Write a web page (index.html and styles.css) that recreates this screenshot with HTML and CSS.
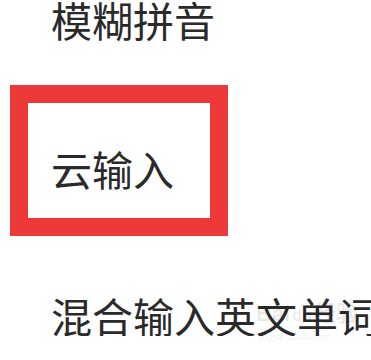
FILE: index.html
```html
<!DOCTYPE html>
<html lang="zh-CN">
<head>
    <meta charset="UTF-8">
    <meta name="viewport" content="width=device-width, initial-scale=1.0">
    <title>输入设置</title>
    <link rel="stylesheet" href="styles.css">
</head>
<body>
    <div class="settings">
        <div class="option option-first">模糊拼音</div>
        <div class="highlight">
            <div class="option option-inner">云输入</div>
        </div>
        <div class="option option-last">混合输入英文单词</div>
    </div>
    <div class="watermark">
        <span class="wm-logo">Bai<span class="wm-du">du</span>经验</span>
        <span class="wm-url">jingyan.baidu.com</span>
    </div>
</body>
</html>
```

FILE: styles.css
```css
body {
    margin: 0;
    overflow: hidden;
    background: #fff;
    font-family: "Noto Sans CJK SC", "Noto Sans", sans-serif;
}
.settings {
    display: flex;
    flex-direction: column;
    align-items: flex-start;
}
.option {
    font-size: 41px;
    line-height: 41px;
    color: #2a2a2a;
    padding-left: 51px;
    white-space: nowrap;
}
.option-first {
    margin-top: -1px;
}
.highlight {
    box-sizing: border-box;
    width: 218px;
    height: 151px;
    margin: 45px 0 0 10px;
    border: 18px solid #ee3939;
    padding-top: 45px;
}
.option-inner {
    padding-left: 23px;
}
.option-last {
    margin-top: 59px;
}
.watermark {
    position: absolute;
    left: 256px;
    top: 300px;
    display: flex;
    flex-direction: column;
    color: rgba(0, 0, 0, 0.09);
    font-family: "Liberation Sans", sans-serif;
}
.wm-logo {
    font-size: 22px;
    font-weight: bold;
    line-height: 28px;
}
.wm-du {
    font-size: 16px;
    margin: 0 2px;
}
.wm-url {
    font-size: 9px;
    line-height: 14px;
    padding-left: 2px;
}
```
